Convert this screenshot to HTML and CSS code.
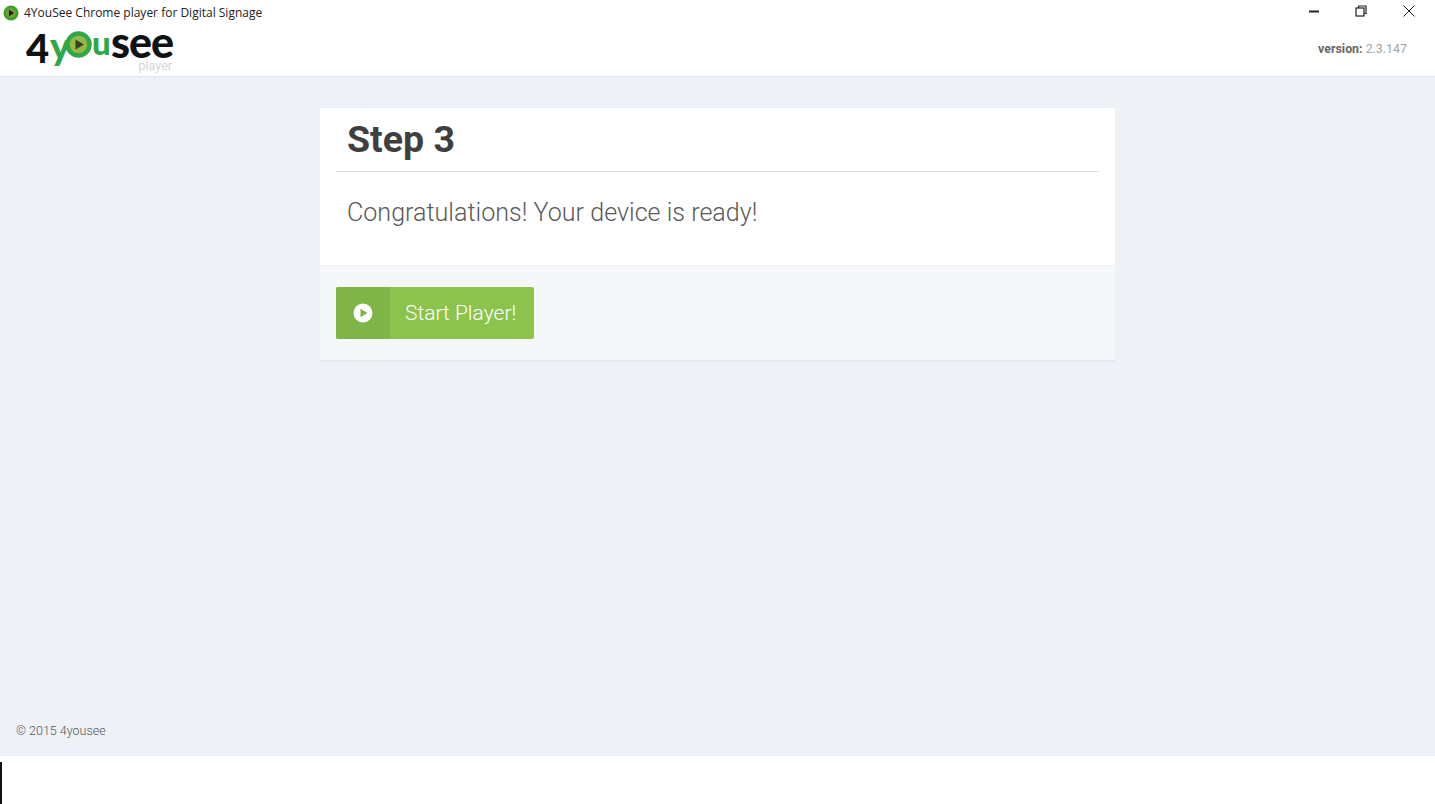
FILE: index.html
```html
<!DOCTYPE html>
<html lang="en">
<head>
  <meta charset="UTF-8" />
  <title>4YouSee Chrome player for Digital Signage</title>
  <link rel="stylesheet" href="styles.css">
</head>
<body>

  <!-- Window title bar -->
  <div class="titlebar">
    <div class="app-title">
      <svg class="app-icon" width="16" height="16" viewBox="0 0 16 16">
        <circle cx="8" cy="8" r="7.5" fill="#3aa51f"/>
        <circle cx="8" cy="8" r="5" fill="#7d9a3c"/>
        <path d="M6 4.8 L11 8 L6 11.2 Z" fill="#1c2412"/>
      </svg>
      <span>4YouSee Chrome player for Digital Signage</span>
    </div>
    <div class="window-buttons">
      <svg width="12" height="12" viewBox="0 0 12 12"><path d="M2 6.5 H12" stroke="#222" stroke-width="2"/></svg>
      <svg width="12" height="12" viewBox="0 0 12 12" fill="none" stroke="#222" stroke-width="1.2"><rect x="1" y="3" width="8" height="8"/><path d="M3.5 3 V1 H11 V8.5 H9"/></svg>
      <svg width="12" height="12" viewBox="0 0 12 12" fill="none" stroke="#222" stroke-width="1"><path d="M0.5 0.5 L11.5 11.5 M11.5 0.5 L0.5 11.5"/></svg>
    </div>
  </div>

  <!-- Header with logo -->
  <header class="app-header">
    <div class="logo">
      <div class="logo-word">
        <span class="logo-four">4</span><span class="logo-y">y</span><svg class="logo-eye" width="27" height="27" viewBox="0 0 27 27">
          <circle cx="13.5" cy="13.5" r="11" fill="#97b843" stroke="#2fa84a" stroke-width="4.5"/>
          <path d="M10.5 8.5 L19 13.5 L10.5 18.5 Z" fill="#3a3f2a"/>
        </svg><span class="logo-u">u</span><span class="logo-see">see</span>
      </div>
      <span class="logo-sub">player</span>
    </div>
    <p class="version"><b>version:</b> 2.3.147</p>
  </header>

  <!-- Main content -->
  <main class="content">
    <section class="card">
      <div class="card-body">
        <h1>Step 3</h1>
        <p>Congratulations! Your device is ready!</p>
      </div>
      <div class="card-footer">
        <button class="start-btn" type="button">
          <span class="start-icon">
            <svg width="20" height="20" viewBox="0 0 20 20">
              <circle cx="10" cy="10" r="9.5" fill="#fff"/>
              <path d="M7.5 5.8 L14.5 10 L7.5 14.2 Z" fill="#7fb446"/>
            </svg>
          </span>
          <span class="start-label">Start Player!</span>
        </button>
      </div>
    </section>
    <footer class="copyright">© 2015 4yousee</footer>
  </main>

  <!-- Blank strip under the app -->
  <div class="bottom-strip"><div class="cursor-line"></div></div>

</body>
</html>
```

FILE: styles.css
```css
/* Base styling */
html, body {
  height: 100%;
}
body {
  margin: 0;
  height: 804px;
  display: flex;
  flex-direction: column;
  overflow: hidden;
  background: #fff;
  font-family: Roboto, 'Liberation Sans', sans-serif;
}
/* Title bar */
.titlebar {
  height: 25px;
  flex: none;
  display: flex;
  justify-content: space-between;
  align-items: center;
  padding: 0 20px 0 3px;
}
.app-title {
  display: flex;
  align-items: center;
  gap: 5px;
  font-family: 'Open Sans', sans-serif;
  font-size: 12px;
  color: #222;
}
.app-icon {
  flex: none;
}
.window-buttons {
  display: flex;
  gap: 36px;
  margin-top: -3px;
}
/* Header */
.app-header {
  height: 51px;
  flex: none;
  display: flex;
  justify-content: space-between;
  align-items: flex-start;
  padding: 0 28px 0 26px;
  border-bottom: 1px solid #dfe3ea;
}
.logo {
  display: flex;
  flex-direction: column;
  align-items: flex-end;
  width: 147px;
}
.logo-word {
  display: flex;
  align-items: flex-start;
  height: 30px;
  padding-top: 5px;
  font-family: Lato, sans-serif;
  font-weight: 900;
  line-height: 34px;
}
.logo-four {
  width: 24px;
  margin-top: 1px;
  font-size: 40px;
  color: #111;
}
.logo-y {
  width: 15px;
  margin-top: -2px;
  font-size: 38px;
  color: #2fa84a;
}
.logo-eye {
  flex: none;
  margin-top: 1px;
}
.logo-u {
  width: 19px;
  margin-top: -5px;
  font-size: 33px;
  color: #2fa84a;
}
.logo-see {
  margin-top: -5px;
  font-size: 43px;
  letter-spacing: -1px;
  color: #111;
}
.logo-sub {
  margin-right: 1px;
  font-size: 12.5px;
  line-height: 12px;
  color: #d3d5d7;
}
.version {
  margin: 17px 0 0;
  font-size: 12.4px;
  line-height: 13px;
  color: #a0a4a8;
}
.version b {
  color: #666;
}
/* Main area */
.content {
  height: 679px;
  flex: none;
  box-sizing: border-box;
  display: flex;
  flex-direction: column;
  background: #eef1f5;
  padding: 31px 16px 18px;
}
.card {
  width: 795px;
  margin: 0 auto;
  background: #fff;
  border-bottom: 2px solid #e6e9ed;
}
.card-body {
  height: 157px;
  margin: 0 16px;
}
.card-body h1 {
  margin: 0;
  height: 64px;
  box-sizing: border-box;
  padding: 9px 0 0 11px;
  font-size: 37.5px;
  line-height: 44px;
  font-weight: 700;
  color: #3f3f3f;
  border-bottom: 1px solid #dfe1e4;
}
.card-body p {
  margin: 0;
  padding: 26px 0 0 11px;
  font-size: 25.1px;
  line-height: 30px;
  font-weight: 300;
  color: #5a5a5a;
}
.card-footer {
  height: 95px;
  box-sizing: border-box;
  padding: 21px 16px 0;
  background: #f6f7fb;
  border-top: 1px solid #f1f2f6;
}
/* Start button */
.start-btn {
  display: flex;
  align-items: stretch;
  width: 198px;
  height: 52px;
  padding: 0;
  border: none;
  border-radius: 2px;
  overflow: hidden;
  background: #8bc34d;
  color: #fff;
  font-family: inherit;
  cursor: pointer;
}
.start-icon {
  width: 54px;
  display: flex;
  align-items: center;
  justify-content: center;
  background: #7fb446;
}
.start-label {
  padding-left: 15px;
  font-size: 21px;
  font-weight: 300;
  line-height: 52px;
}
/* Copyright */
.copyright {
  margin-top: auto;
  font-size: 12.5px;
  font-weight: 300;
  line-height: 15px;
  color: #555;
}
/* Blank strip */
.bottom-strip {
  flex: 1;
  padding-top: 6px;
  box-sizing: border-box;
}
.cursor-line {
  width: 2px;
  height: 42px;
  background: #111;
}
```
